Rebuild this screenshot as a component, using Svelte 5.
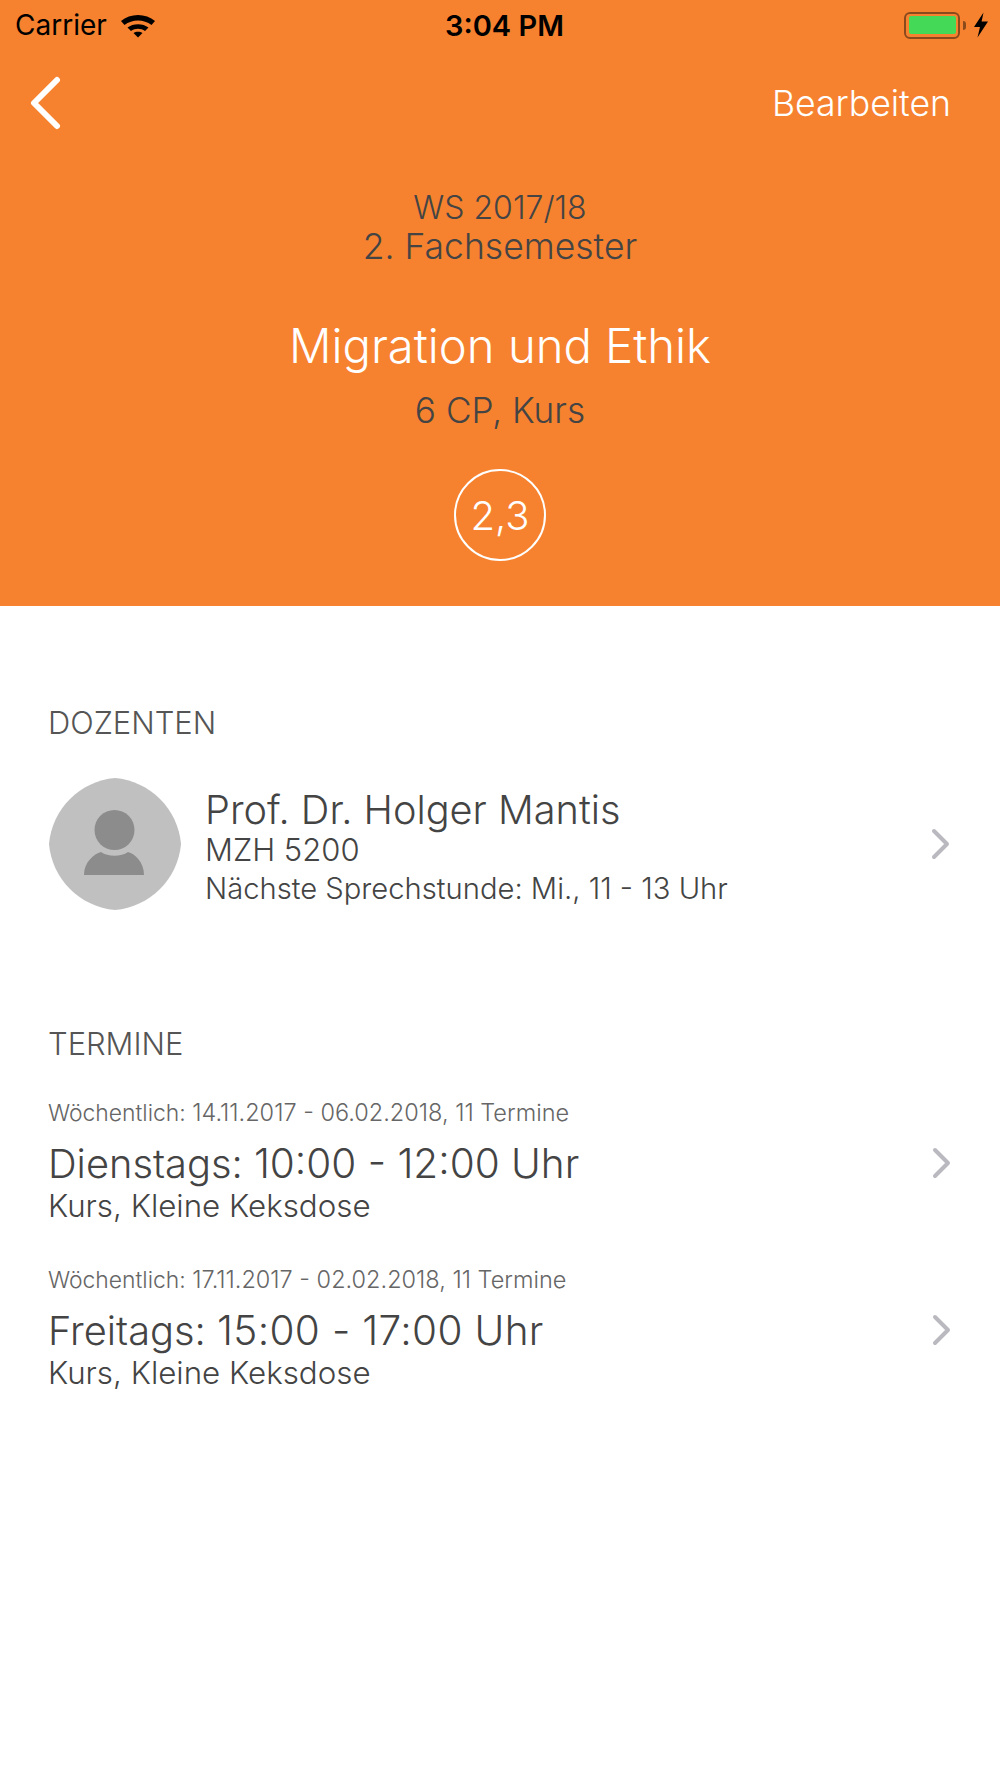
<script>
  const termine = [
    { range: '14.11.2017 - 06.02.2018, 11 Termine', day: 'Dienstags:', time: '10:00 - 12:00 Uhr', loose: false },
    { range: '17.11.2017 - 02.02.2018, 11 Termine', day: 'Freitags:', time: '15:00 - 17:00 Uhr', loose: true }
  ];
</script>

{#snippet chevron()}
  <svg class="chev" width="20" height="32" viewBox="0 0 20 32" aria-hidden="true">
    <path d="M3 3 L16 16 L3 29" fill="none" stroke="#b9b9bf" stroke-width="4" stroke-linecap="round" stroke-linejoin="round" />
  </svg>
{/snippet}

<div class="page">
  <header class="hero">
    <div class="status">
      <div class="status-left">
        <span class="carrier">Carrier</span>
        <svg width="36" height="26" viewBox="0 0 36 26" aria-hidden="true">
          <path d="M1 9 C 10 1, 26 1, 35 9 L31.5 13 C 24 7, 12 7, 4.5 13 Z" />
          <path d="M7.5 15.5 C 13 11, 23 11, 28.5 15.5 L25 19 C 21 16, 15 16, 11 19 Z" />
          <path d="M13.5 21 C 16 19.3, 20 19.3, 22.5 21 L18 25.5 Z" />
        </svg>
      </div>
      <span class="time">3:04 PM</span>
      <div class="status-right">
        <span class="battery"><span class="fill"></span></span>
        <span class="nub"></span>
        <svg width="16" height="26" viewBox="0 0 16 26" aria-hidden="true">
          <path d="M10.5 0.5 L1 15 L7 15 L4.5 25.5 L15 9.5 L8.6 9.5 Z" />
        </svg>
      </div>
    </div>
    <nav class="nav">
      <svg width="32" height="54" viewBox="0 0 32 54" aria-hidden="true">
        <path d="M28 4 L5 27 L28 50" fill="none" stroke="#fff" stroke-width="6" stroke-linecap="round" stroke-linejoin="round" />
      </svg>
      <span class="edit">Bearbeiten</span>
    </nav>
    <div class="term">WS 2017/18</div>
    <div class="semester">2. Fachsemester</div>
    <h1>Migration und Ethik</h1>
    <div class="meta">6 CP, Kurs</div>
    <div class="grade">2,3</div>
  </header>

  <section class="docents">
    <h2>DOZENTEN</h2>
    <div class="person">
      <svg class="avatar" width="132" height="132" viewBox="0 0 132 132" aria-hidden="true">
        <path d="M66 0 C 101 3, 129 31, 132 66 C 129 101, 101 129, 66 132 C 31 129, 3 101, 0 66 C 3 31, 31 3, 66 0 Z" fill="#c0c0c0" />
        <circle cx="65.5" cy="52" r="20" fill="#8c8c8c" />
        <path d="M35 97 C 35 84, 45 76, 52 74 C 59 79, 72 79, 79 74 C 86 76, 95 84, 95 97 Z" fill="#8c8c8c" />
      </svg>
      <div class="person-text">
        <div class="name">Prof. Dr. Holger Mantis</div>
        <div class="room">MZH 5200</div>
        <div class="hours">Nächste Sprechstunde: Mi., 11 - 13 Uhr</div>
      </div>
      {@render chevron()}
    </div>
  </section>

  <section class="dates">
    <h2>TERMINE</h2>
    {#each termine as t}
      <div class="date">
        <div class="date-text">
          <div class="info">Wöchentlich: <span class="range">{t.range}</span></div>
          <div class="title">{t.day} <span class="clock" class:loose={t.loose}>{t.time}</span></div>
          <div class="place">Kurs, Kleine Keksdose</div>
        </div>
        {@render chevron()}
      </div>
    {/each}
  </section>
</div>

<style>
  :global(body) {
    margin: 0;
    background: #fff;
  }
  .page {
    width: 1000px;
    height: 1778px;
    overflow: hidden;
    font-family: Inter, "Liberation Sans", sans-serif;
    color: #444;
    background: #fff;
  }
  .hero {
    height: 606px;
    background: #f6822f;
    display: flex;
    flex-direction: column;
    align-items: center;
    box-sizing: border-box;
  }
  .status {
    width: 100%;
    height: 50px;
    box-sizing: border-box;
    padding: 0 11px 0 15px;
    display: flex;
    align-items: center;
    justify-content: space-between;
    color: #000;
    position: relative;
  }
  .status-left, .status-right {
    display: flex;
    align-items: center;
  }
  .status-left { gap: 13px; }
  .carrier { font-size: 28px; }
  .time {
    position: absolute;
    left: 0;
    right: 0;
    text-align: center;
    font-size: 29px;
    font-weight: 600;
    margin-left: 9px;
  }
  .battery {
    width: 56px;
    height: 27px;
    box-sizing: border-box;
    border: 2.5px solid #8a4a1c;
    border-radius: 6px;
    padding: 2.5px;
    display: block;
  }
  .fill {
    display: block;
    height: 100%;
    background: #44d956;
    border-radius: 2px;
  }
  .nub {
    width: 3px;
    height: 9px;
    background: #8a4a1c;
    border-radius: 0 4px 4px 0;
    margin: 0 7px 0 3px;
  }
  .nav {
    width: 100%;
    height: 106px;
    box-sizing: border-box;
    padding: 0 49px 0 29px;
    display: flex;
    align-items: center;
    justify-content: space-between;
    color: #fff;
  }
  .edit { font-size: 35.6px; font-weight: 300; }
  .term { font-size: 32px; line-height: 36px; margin-top: 34px; font-weight: 300; }
  .semester { font-size: 35.5px; line-height: 42px; font-weight: 300; }
  h1 {
    margin: 49px 0 0;
    font-size: 47.2px;
    line-height: 58px;
    font-weight: 300;
    color: #fff;
  }
  .meta { font-size: 35.2px; line-height: 42px; margin-top: 14px; font-weight: 300; }
  .grade {
    width: 92px;
    height: 92px;
    box-sizing: border-box;
    border: 2.5px solid #fff;
    border-radius: 50%;
    margin-top: 38px;
    display: flex;
    align-items: center;
    justify-content: center;
    color: #fff;
    font-size: 40px;
    font-weight: 300;
  }
  section { padding: 0 49px; }
  h2 {
    margin: 0 0 0 -1px;
    font-size: 30.9px;
    line-height: 34px;
    font-weight: 300;
    color: #555;
  }
  .docents { padding-top: 100px; }
  .person {
    margin-top: 38px;
    height: 132px;
    display: flex;
    align-items: center;
    padding-right: 1px;
    margin-right: -1px;
  }
  .avatar { flex: none; }
  .person-text {
    flex: 1;
    margin: 9.5px 0 0 24px;
    align-self: flex-start;
    font-weight: 300;
  }
  .name { font-size: 39.7px; line-height: 44px; }
  .room { font-size: 31px; line-height: 36px; }
  .hours { font-size: 29.2px; line-height: 41px; }
  .chev { flex: none; }
  .dates { padding-top: 117px; }
  .date {
    display: flex;
    align-items: center;
    height: 166.6px;
    margin-right: -1px;
  }
  .date-text { flex: 1; font-weight: 300; margin-left: -1px; }
  .dates h2 { margin-bottom: 18px; }
  .date .chev { margin-top: 2px; }
  .info { font-size: 22.9px; line-height: 26px; color: #666; }
  .range { font-size: 23.5px; }
  .title { font-size: 39.8px; line-height: 50px; margin-top: 13px; }
  .clock { font-size: 40.5px; }
  .clock.loose { letter-spacing: 0.35px; }
  .place { font-size: 31.3px; line-height: 36px; margin-top: -1px; }
</style>
